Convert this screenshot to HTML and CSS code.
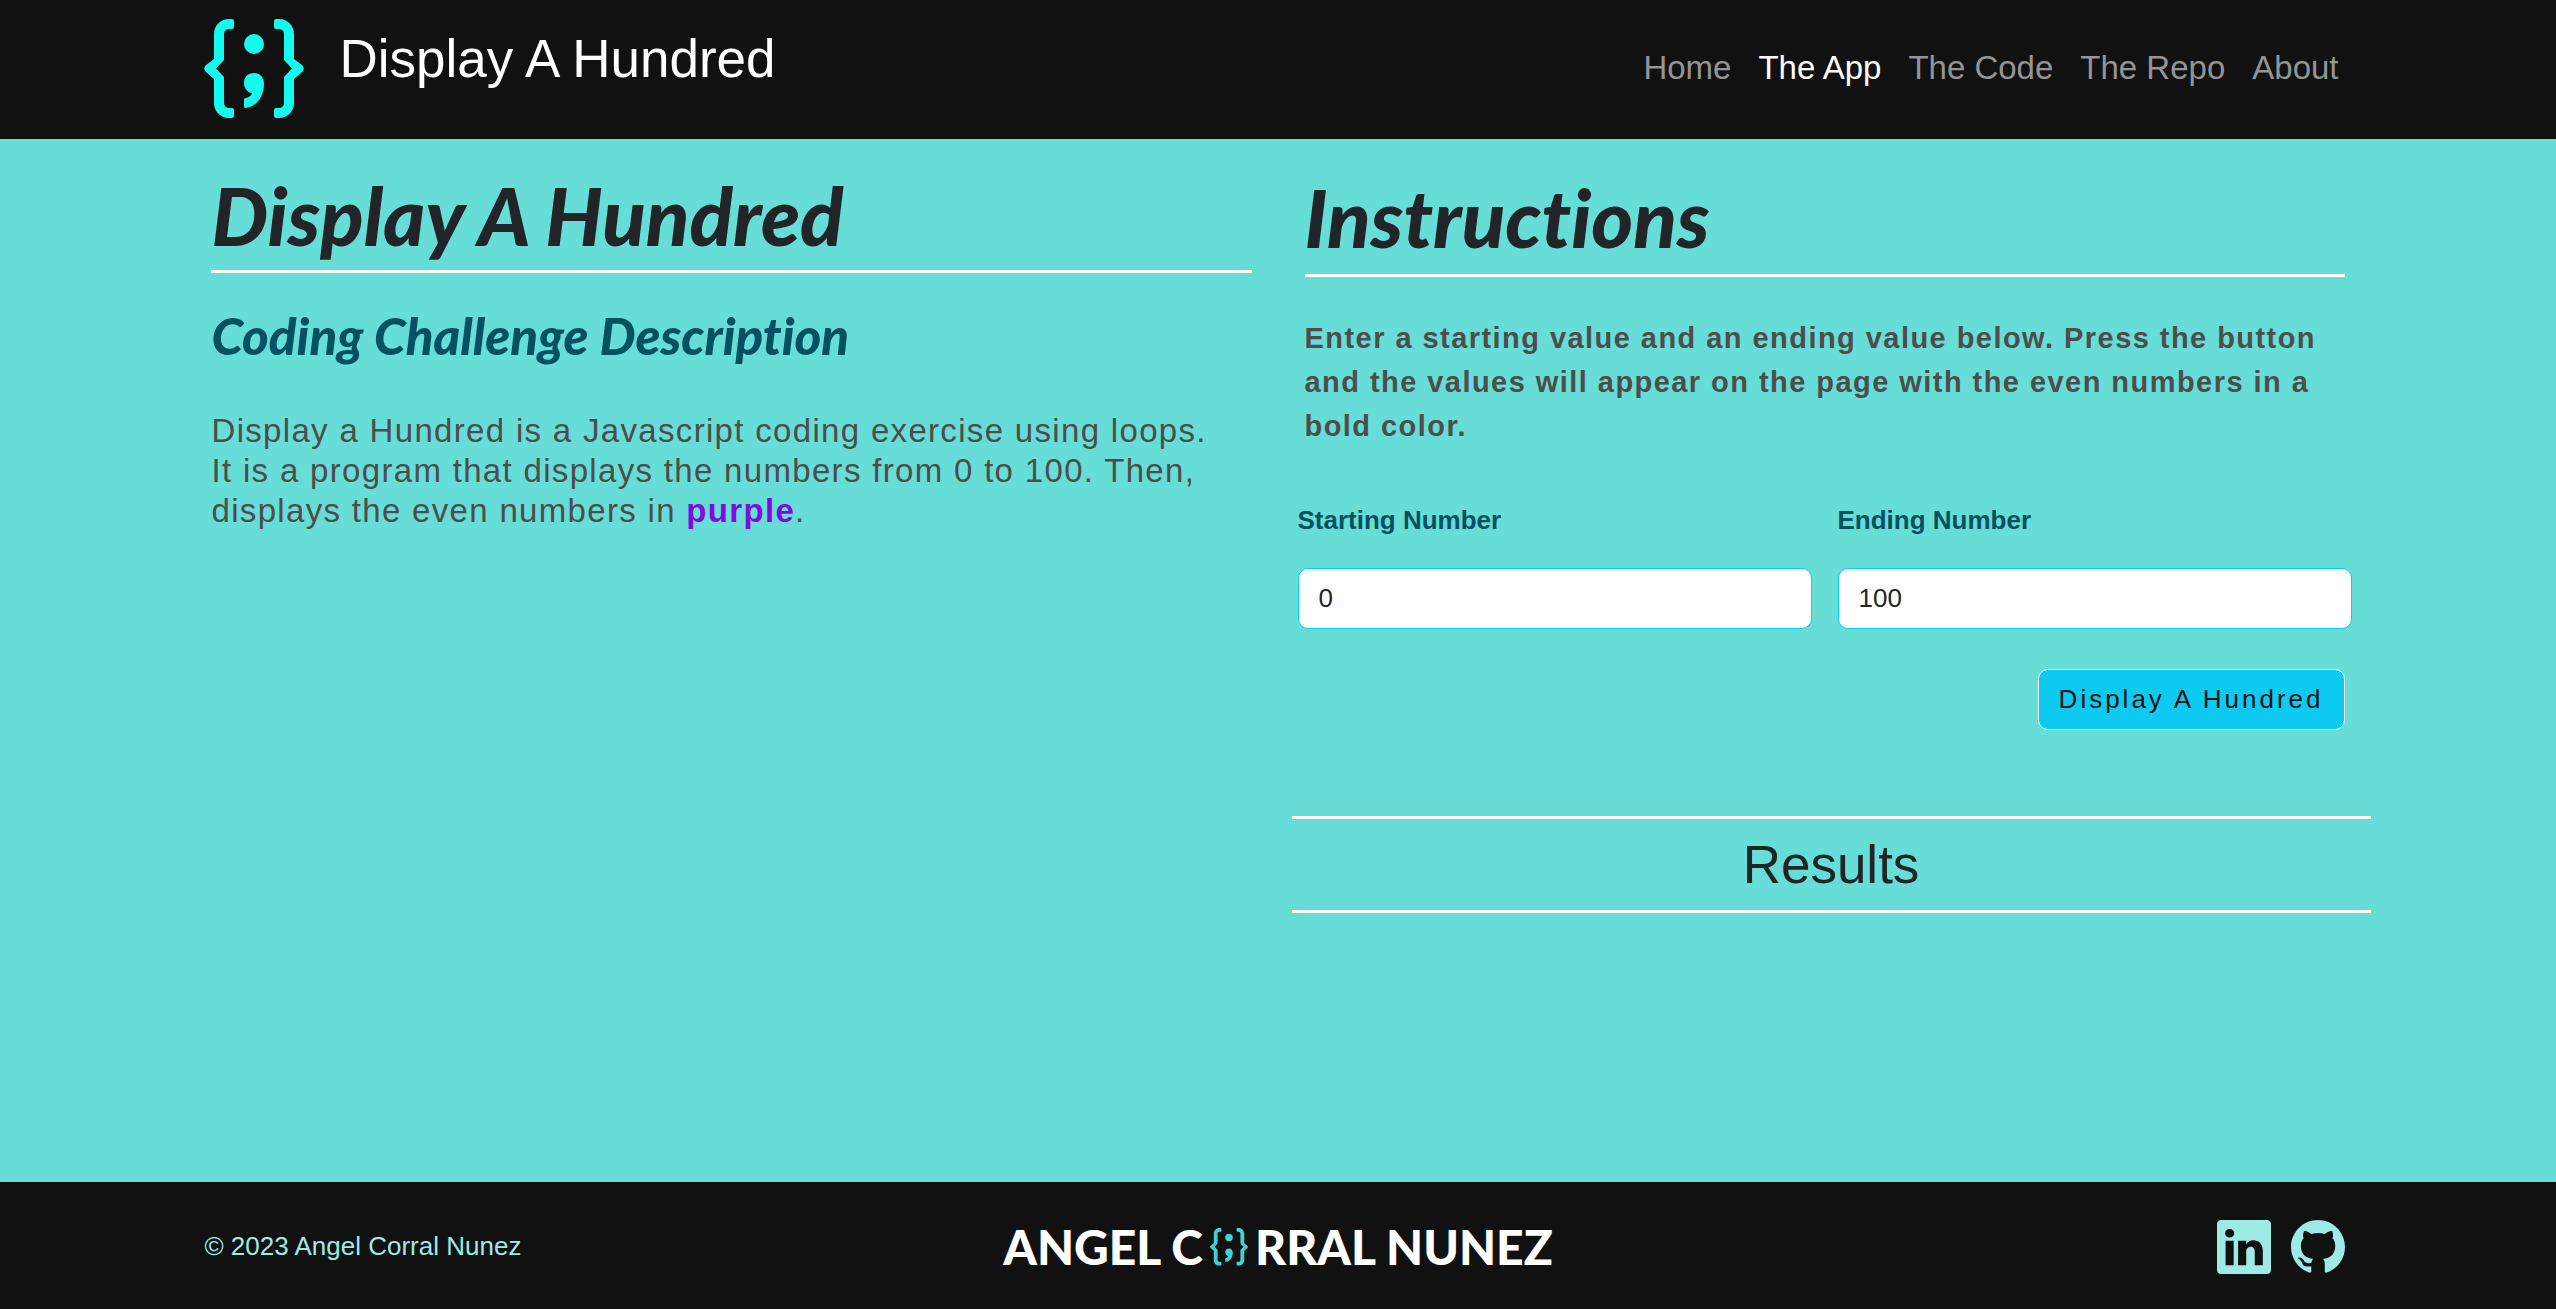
FILE: index.html
```html
<!DOCTYPE html>
<html lang="en">
<head>
<meta charset="utf-8">
<meta name="viewport" content="width=device-width, initial-scale=1">
<title>Display A Hundred</title>
<link rel="stylesheet" href="styles.css">
</head>
<body>
<svg class="sprite" aria-hidden="true">
  <symbol id="braces" viewBox="0 0 100 100">
    <path id="brace" d="M28 0H25C16 0 10 7 10 15V40L1.500 46.500Q-1 49.500 1.500 52.500L10 60V84C10 92 16 99 25 99H28Q30 99 30 97V91Q30 89 28 89H26C22 89 20 87 20 84V58L12 49.500L20 41V15C20 12 22 10 26 10H28Q30 10 30 8V2Q30 0 28 0Z"/>
    <use href="#brace" transform="matrix(-1 0 0 1 100 0)"/>
    <circle cx="50" cy="25" r="10"/>
    <path d="M50 54C56 54 60 58 60 65C60 78 52 88 41.500 89Q40 89 40 87.500V80.500Q40 79.500 41 79.300Q47 78 48 74.300C43 73 40 69 40 64C40 58 44 54 50 54Z"/>
  </symbol>
</svg>
<header class="site-header">
  <div class="bar">
    <a class="brand" href="#">
      <svg class="brand-logo" aria-hidden="true"><use href="#braces"/></svg>
      <span>Display A Hundred</span>
    </a>
    <nav class="nav">
      <a href="#">Home</a>
      <a class="active" href="#" aria-current="page">The App</a>
      <a href="#">The Code</a>
      <a href="#">The Repo</a>
      <a href="#">About</a>
    </nav>
  </div>
</header>
<main class="content">
  <section>
    <h1 class="title">Display A Hundred</h1>
    <h2 class="subtitle">Coding Challenge Description</h2>
    <p class="description">Display a Hundred is a Javascript coding exercise using loops. It is a program that displays the numbers from 0 to 100. Then, displays the even numbers in <strong>purple</strong>.</p>
  </section>
  <section>
    <h2 class="title title-large">Instructions</h2>
    <p class="instructions">Enter a starting value and an ending value below. Press the button and the values will appear on the page with the even numbers in a bold color.</p>
    <form class="form">
      <div class="field">
        <label for="start">Starting Number</label>
        <input id="start" type="text" inputmode="numeric" value="0">
      </div>
      <div class="field">
        <label for="end">Ending Number</label>
        <input id="end" type="text" inputmode="numeric" value="100">
      </div>
      <button class="submit" type="button">Display A Hundred</button>
    </form>
    <h2 class="results">Results</h2>
  </section>
</main>
<footer class="site-footer">
  <div class="bar footer-bar">
    <span class="copyright">© 2023 Angel Corral Nunez</span>
    <div class="wordmark"><span>ANGEL C</span><svg class="wordmark-o" aria-hidden="true"><use href="#braces"/></svg><span>RRAL NUNEZ</span></div>
    <div class="social">
      <a href="#" aria-label="LinkedIn"><svg viewBox="0 0 16 16"><path d="M0 1.146C0 .513.526 0 1.175 0h13.650C15.474 0 16 .513 16 1.146v13.708c0 .633-.526 1.146-1.175 1.146H1.175C.526 16 0 15.487 0 14.854V1.146zm4.943 12.248V6.169H2.542v7.225h2.401zm-1.200-8.212c.837 0 1.358-.554 1.358-1.248-.015-.709-.520-1.248-1.342-1.248-.822 0-1.359.540-1.359 1.248 0 .694.521 1.248 1.327 1.248h.016zm4.908 8.212V9.359c0-.216.016-.432.080-.586.173-.431.568-.878 1.232-.878.869 0 1.216.662 1.216 1.634v3.865h2.401V9.250c0-2.220-1.184-3.252-2.764-3.252-1.274 0-1.845.700-2.165 1.193v.025h-.016a5.540 5.540 0 0 1 .016-.025V6.169h-2.400c.030.678 0 7.225 0 7.225h2.400z"/></svg></a>
      <a href="#" aria-label="GitHub"><svg viewBox="0 0 16 16"><path d="M8 0C3.580 0 0 3.580 0 8c0 3.540 2.290 6.530 5.470 7.590.400.070.550-.170.550-.380 0-.190-.010-.820-.010-1.490-2.010.370-2.530-.490-2.690-.940-.090-.230-.480-.940-.820-1.130-.280-.150-.680-.520-.010-.530.630-.010 1.080.580 1.230.820.720 1.210 1.870.870 2.330.660.070-.520.280-.870.510-1.070-1.780-.200-3.640-.890-3.640-3.950 0-.870.310-1.590.820-2.150-.080-.200-.360-1.020.080-2.120 0 0 .670-.210 2.200.820.640-.180 1.320-.270 2-.270.680 0 1.360.090 2 .270 1.530-1.040 2.200-.820 2.200-.820.440 1.100.160 1.920.080 2.120.510.560.820 1.270.820 2.150 0 3.070-1.870 3.750-3.650 3.950.290.250.540.730.540 1.480 0 1.070-.010 1.930-.010 2.200 0 .210.150.460.550.380A8.012 8.012 0 0 0 16 8c0-4.420-3.580-8-8-8z"/></svg></a>
    </div>
  </div>
</footer>
</body>
</html>
```
FILE: styles.css
```css
* {
  box-sizing: border-box;
}

body {
  display: flex;
  flex-direction: column;
  min-height: 100vh;
  margin: 0;
  background: #66ddd6;
  color: #212529;
  font-family: "Liberation Sans", Arial, sans-serif;
  font-size: 26px;
}

h1,
h2,
p {
  margin: 0;
}

a {
  color: inherit;
  text-decoration: none;
}

.sprite {
  display: none;
}

/* Header */
.site-header,
.site-footer {
  background: #111;
}

.bar {
  display: flex;
  align-items: center;
  justify-content: space-between;
  width: 84%;
  margin: 0 auto;
}

.brand {
  display: flex;
  gap: 35px;
  padding: 19px 0 20px;
  color: #fff;
  font-size: 53px;
  line-height: 80px;
}

.brand-logo {
  width: 100px;
  height: 100px;
  fill: #15faee;
}

.nav {
  display: flex;
  gap: 1px;
  color: #949494;
  font-size: 33px;
}

.nav a {
  padding: 12px 13px 16px;
}

.nav .active {
  color: #fff;
}

/* Main */
.content {
  display: grid;
  flex: 1;
  grid-template-columns: 1fr 1fr;
  gap: 53px;
  width: 84%;
  margin: 0 auto;
  padding: 32px 7px;
}

.title {
  padding-bottom: 11px;
  border-bottom: 3px solid #fff;
  font: italic 900 80px/88px Lato, sans-serif;
  font-variant-ligatures: none;
}

.title-large {
  line-height: 92px;
}

.subtitle {
  margin-top: 34px;
  color: #055160;
  font: italic 900 51px/58px Lato, sans-serif;
  font-variant-ligatures: none;
}

.description,
.instructions {
  color: #4d4d4d;
}

.description {
  margin-top: 46px;
  padding-right: 26px;
  font-size: 33px;
  letter-spacing: 0.04em;
  line-height: 40px;
}

.description strong {
  color: #7f0be0;
}

.instructions {
  margin-top: 39px;
  font-size: 29px;
  font-weight: 700;
  letter-spacing: 0.05em;
  line-height: 44px;
}

.form {
  display: grid;
  grid-template-columns: 1fr 1fr;
  gap: 40px 26px;
  margin: 53px -7px 0;
}

.field {
  display: grid;
  gap: 28px;
}

.field label {
  color: #055160;
  font-weight: 700;
  line-height: 39px;
}

.field input {
  width: 100%;
  height: 61px;
  padding: 0 20px;
  border: 1px solid #0dcaf0;
  border-radius: 10px;
  background: #fff;
  color: #212529;
  font: inherit;
}

.submit {
  grid-column: 2;
  justify-self: end;
  height: 61px;
  margin-right: 7px;
  padding: 0 20px;
  border: 1px solid #fff;
  border-radius: 10px;
  background: #0dcaf0;
  color: #111;
  font: inherit;
  letter-spacing: 3px;
}

.results {
  margin: 86px -26px 0 -13px;
  padding: 14px 0;
  border: solid #fff;
  border-width: 3px 0;
  font-size: 53px;
  font-weight: 400;
  line-height: 63px;
  text-align: center;
}

/* Footer */
.footer-bar {
  display: grid;
  grid-template-columns: 1fr auto 1fr;
  padding: 33px 0 31px;
}

.copyright,
.social {
  color: #9eeae5;
}

.wordmark {
  display: flex;
  align-items: center;
  color: #fff;
  font: 900 48px/63px Lato, sans-serif;
}

.wordmark-o {
  width: 38px;
  height: 38px;
  margin: 0 7px;
  fill: #3dd5cd;
}

.social {
  display: flex;
  justify-content: end;
  gap: 20px;
  padding-right: 7px;
}

.social svg {
  display: block;
  width: 54px;
  height: 54px;
  fill: currentColor;
}
```
